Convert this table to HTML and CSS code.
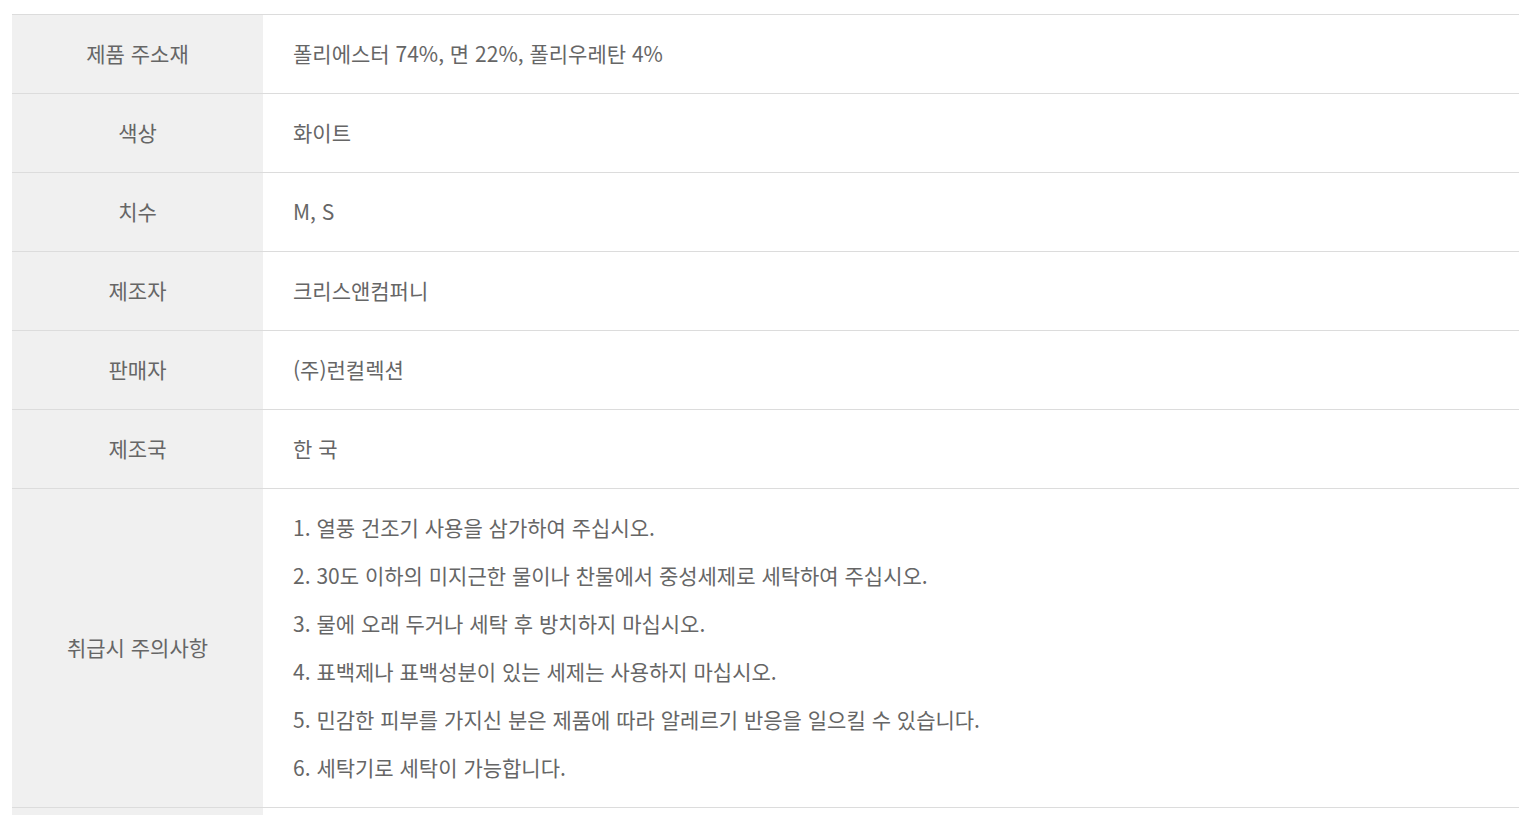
FILE: index.html
```html
<!DOCTYPE html>
<html lang="ko">
<head>
<meta charset="utf-8">
<link rel="stylesheet" href="styles.css">
</head>
<body>
<div class="wrap">
<table class="spec">
  <tr><th>제품 주소재</th><td>폴리에스터 74%, 면 22%, 폴리우레탄 4%</td></tr>
  <tr><th>색상</th><td>화이트</td></tr>
  <tr><th>치수</th><td>M, S</td></tr>
  <tr><th>제조자</th><td>크리스앤컴퍼니</td></tr>
  <tr><th>판매자</th><td>(주)런컬렉션</td></tr>
  <tr><th>제조국</th><td>한 국</td></tr>
  <tr><th>취급시 주의사항</th><td>
    <ol class="care">
      <li>1. 열풍 건조기 사용을 삼가하여 주십시오.</li>
      <li>2. 30도 이하의 미지근한 물이나 찬물에서 중성세제로 세탁하여 주십시오.</li>
      <li>3. 물에 오래 두거나 세탁 후 방치하지 마십시오.</li>
      <li>4. 표백제나 표백성분이 있는 세제는 사용하지 마십시오.</li>
      <li>5. 민감한 피부를 가지신 분은 제품에 따라 알레르기 반응을 일으킬 수 있습니다.</li>
      <li>6. 세탁기로 세탁이 가능합니다.</li>
    </ol>
  </td></tr>
  <tr class="empty"><th></th><td></td></tr>
</table>
</div>
</body>
</html>
```

FILE: styles.css
```css
html, body {
  margin: 0;
  padding: 0;
  background: #fff;
}
.wrap {
  padding: 14px 10px 0 12px;
}
.spec {
  width: 100%;
  border-collapse: collapse;
  border-top: 1px solid #dcdcdc;
  font-family: "Noto Sans CJK KR", "Noto Sans", sans-serif;
  font-size: 21px;
  color: #666;
}
.spec tr {
  border-bottom: 1px solid #dcdcdc;
}
.spec th {
  width: 251px;
  background: #f0f0f0;
  font-weight: 400;
  text-align: center;
  padding: 14px 0 16px;
  line-height: 48px;
  height: 48px;
  vertical-align: middle;
}
.spec td {
  padding: 14px 30px 16px;
  line-height: 48px;
  text-align: left;
  vertical-align: middle;
}
.care {
  list-style: none;
  margin: 0;
  padding: 0;
}
```
